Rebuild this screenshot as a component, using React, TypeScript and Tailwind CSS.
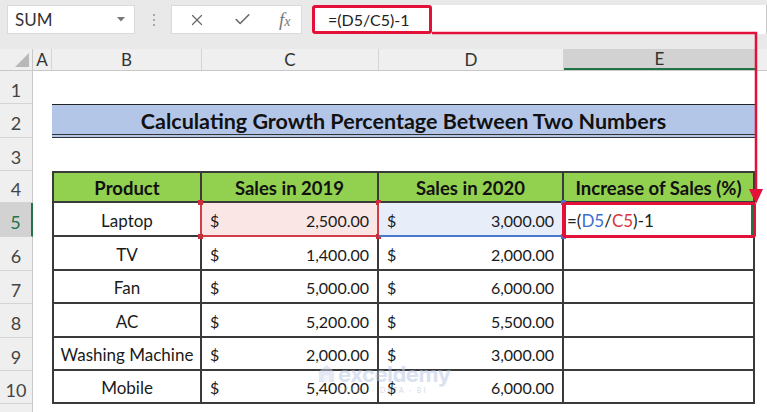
import React from 'react';
import { X, Check } from 'lucide-react';

interface RowData {
  n: number;
  product: string;
  s19: string;
  s20: string;
  h: string;
}

const rows: RowData[] = [
  { n: 6, product: 'TV', s19: '1,400.00', s20: '2,000.00', h: 'h-[34px]' },
  { n: 7, product: 'Fan', s19: '5,000.00', s20: '6,000.00', h: 'h-[33px]' },
  { n: 8, product: 'AC', s19: '5,200.00', s20: '5,500.00', h: 'h-[34px]' },
  { n: 9, product: 'Washing Machine', s19: '2,000.00', s20: '3,000.00', h: 'h-[33px]' },
  { n: 10, product: 'Mobile', s19: '5,400.00', s20: '6,000.00', h: 'h-[33px]' },
];

function RowHead({ n, active }: { n?: number; active?: boolean }) {
  return (
    <div
      className={`w-[33px] shrink-0 flex items-center justify-center border-b border-[#d4d4d4] text-[18px] pt-[6px] ${
        active
          ? 'bg-[#d2d2d2] text-[#217346] border-r-2 border-r-[#217346]'
          : 'bg-[#efefef] text-[#444] border-r border-r-[#c8c8c8]'
      }`}
    >
      {n}
    </div>
  );
}

function Money({ value }: { value: string }) {
  return (
    <>
      <span>$</span>
      <span>{value}</span>
    </>
  );
}

function Handle({ pos, color }: { pos: string; color: string }) {
  return <span className={`absolute w-[5px] h-[5px] ${pos} ${color}`} />;
}

export default function App() {
  return (
    <div className="relative w-[767px] h-[412px] overflow-hidden bg-white text-[#1a1a1a] font-['Lato',_'Open_Sans',_sans-serif]">
      {/* formula bar */}
      <div className="flex items-start h-[49px] bg-[#e9e9e9] pt-[5px] pl-[7px]">
        <div className="flex items-center justify-between w-[128px] h-[29px] bg-white border border-[#dadada] pl-[7px] pr-[9px] text-[17px] text-[#333]">
          SUM
          <svg width="8" height="5" viewBox="0 0 8 5">
            <polygon points="0,0 8,0 4,4.5" fill="#777" />
          </svg>
        </div>
        <div className="flex flex-col gap-[3px] mt-[9px] ml-[18px] mr-[16px]">
          <span className="w-[2px] h-[2px] bg-[#aaa]" />
          <span className="w-[2px] h-[2px] bg-[#aaa]" />
          <span className="w-[2px] h-[2px] bg-[#aaa]" />
        </div>
        <div className="flex items-center w-[131px] h-[29px] bg-white border border-[#dadada] pl-[16px] gap-[27px] text-[#6a6a6a]">
          <X size={18} strokeWidth={1.6} />
          <Check size={19} strokeWidth={2} />
          <span className="font-['Liberation_Serif',_serif] italic text-[19px] text-[#777] leading-none">
            f<span className="text-[14px]">x</span>
          </span>
        </div>
        <div className="ml-[10px] flex-1 h-[29px] bg-white border-r border-[#c8c8c8] flex items-center">
          <div className="h-[29px] w-[120px] border-[3px] border-[#e3113a] rounded-[3px] flex items-center pl-[13px] text-[16px] text-[#222]">
            =(D5/C5)-1
          </div>
        </div>
      </div>

      {/* column headers */}
      <div className="flex h-[22px] bg-[#efefef] text-[17px] text-[#333] border-b border-[#c8c8c8]">
        <div className="w-[33px] shrink-0 border-r border-[#c8c8c8] flex items-end justify-end pr-[3px] pb-[3px]">
          <svg width="14" height="14" viewBox="0 0 14 14">
            <polygon points="14,0 14,14 0,14" fill="#b8b8b8" />
          </svg>
        </div>
        <div className="w-[19px] shrink-0 border-r border-[#d4d4d4] flex items-center justify-center">A</div>
        <div className="w-[150px] shrink-0 border-r border-[#d4d4d4] flex items-center justify-center">B</div>
        <div className="w-[177px] shrink-0 border-r border-[#d4d4d4] flex items-center justify-center">C</div>
        <div className="w-[185px] shrink-0 border-r border-[#d4d4d4] flex items-center justify-center">D</div>
        <div className="w-[191px] shrink-0 bg-[#d2d2d2] border-b-2 border-[#217346] flex items-center justify-center">E</div>
        <div className="flex-1" />
      </div>

      {/* row 1 */}
      <div className="flex h-[33px]">
        <RowHead n={1} />
      </div>

      {/* row 2 - title */}
      <div className="flex h-[34px]">
        <RowHead n={2} />
        <div className="w-[19px] shrink-0" />
        <div className="w-[703px] shrink-0 bg-[#b4c6e7] border-t border-[#222] border-b-[4px] border-b-[#333] border-double flex items-center justify-center pt-[3px] font-bold text-[21.5px] text-[#111]">
          Calculating Growth Percentage Between Two Numbers
        </div>
      </div>

      {/* row 3 */}
      <div className="flex h-[33px]">
        <RowHead n={3} />
      </div>

      {/* row 4 - headers */}
      <div className="flex h-[32px]">
        <RowHead n={4} />
        <div className="w-[19px] shrink-0" />
        <div className="flex bg-[#92d050] border-t-2 border-l-2 border-[#3a3a3a] font-bold text-[18.5px] text-[#111]">
          <div className="w-[148px] border-r-2 border-b-2 border-[#3a3a3a] flex items-center justify-center pt-[3px]">Product</div>
          <div className="w-[177px] border-r-2 border-b-2 border-[#3a3a3a] flex items-center justify-center pt-[3px]">Sales in 2019</div>
          <div className="w-[185px] border-r-2 border-b-2 border-[#3a3a3a] flex items-center justify-center pt-[3px]">Sales in 2020</div>
          <div className="w-[191px] border-r-2 border-b-2 border-[#3a3a3a] flex items-center justify-center pt-[3px]">Increase of Sales (%)</div>
        </div>
      </div>

      {/* row 5 - active */}
      <div className="flex h-[34px] text-[16px]">
        <RowHead n={5} active />
        <div className="w-[19px] shrink-0" />
        <div className="w-[150px] shrink-0 border-l-2 border-b-2 border-[#3a3a3a] border-r-2 border-r-[#cf3f4a] flex items-center justify-center pt-[3px] text-[17px]">Laptop</div>
        <div className="relative w-[177px] shrink-0 bg-[#fbe6e6] border-r-2 border-b-2 border-[#cf3f4a] flex items-center justify-between pt-[3px] pl-[8px] pr-[8px]">
          <Money value="2,500.00" />
          <Handle pos="-left-[4px] -top-[3px]" color="bg-[#c9303c]" />
          <Handle pos="-right-[4px] -top-[3px]" color="bg-[#c9303c]" />
          <Handle pos="-left-[4px] -bottom-[4px]" color="bg-[#c9303c]" />
          <Handle pos="-right-[4px] -bottom-[4px]" color="bg-[#c9303c]" />
        </div>
        <div className="relative w-[185px] shrink-0 bg-[#e8eef9] border-b-2 border-b-[#4a78c8] border-r-2 border-r-[#3a3a3a] flex items-center justify-between pt-[3px] pl-[8px] pr-[8px]">
          <Money value="3,000.00" />
          <Handle pos="-right-[4px] -top-[3px]" color="bg-[#4a78c8]" />
          <Handle pos="-right-[4px] -bottom-[4px]" color="bg-[#4a78c8]" />
        </div>
        <div className="relative w-[191px] shrink-0 border-r-2 border-b-2 border-[#3a3a3a] flex items-center pt-[3px] pl-[3px] text-[#222] text-[17px]">
          <span>=(</span>
          <span className="text-[#3d6fd1]">D5</span>
          <span>/</span>
          <span className="text-[#d9363e]">C5</span>
          <span>)-1</span>
          <div className="absolute -left-[2px] -top-[1px] -right-[3px] -bottom-[3px] border-[3px] border-[#e3113a] rounded-[3px] pointer-events-none">
            <div className="absolute inset-y-0 left-0 w-[1px] bg-[#217346]" />
            <div className="absolute inset-y-0 right-0 w-[2px] bg-[#217346]" />
          </div>
        </div>
      </div>

      {rows.map((r) => (
        <div key={r.n} className={`flex ${r.h} text-[16px]`}>
          <RowHead n={r.n} />
          <div className="w-[19px] shrink-0" />
          <div className="w-[150px] shrink-0 border-l-2 border-r-2 border-b-2 border-[#3a3a3a] flex items-center justify-center pt-[3px] text-[17px]">{r.product}</div>
          <div className="w-[177px] shrink-0 border-r-2 border-b-2 border-[#3a3a3a] flex items-center justify-between pt-[3px] pl-[8px] pr-[8px]">
            <Money value={r.s19} />
          </div>
          <div className="w-[185px] shrink-0 border-r-2 border-b-2 border-[#3a3a3a] flex items-center justify-between pt-[3px] pl-[8px] pr-[8px]">
            <Money value={r.s20} />
          </div>
          <div className="w-[191px] shrink-0 border-r-2 border-b-2 border-[#3a3a3a]" />
        </div>
      ))}

      <div className="flex h-[10px]">
        <RowHead />
      </div>

      {/* watermark */}
      <div className="absolute left-[318px] top-[363px] flex items-start gap-[3px] opacity-50 pointer-events-none">
        <svg width="17" height="21" viewBox="0 0 18 22">
          <path d="M1 9 L9 2 L17 9 V20 H1 Z" fill="#c9d3ea" />
          <path d="M6 20 V13 H12 V20" fill="#e6ebf6" />
        </svg>
        <div className="flex flex-col leading-none">
          <span className="font-['Inter',_sans-serif] font-bold text-[22px] text-[#b7c4e4] tracking-[-0.5px]">exceldemy</span>
          <span className="text-[7px] text-[#b0b8c8] tracking-[2px] mt-[2px]">EXCEL · DATA · BI</span>
        </div>
      </div>

      {/* annotation arrow */}
      <svg className="absolute inset-0 pointer-events-none" width="767" height="412" viewBox="0 0 767 412">
        <path d="M432 33 H756 V192" fill="none" stroke="#e3113a" strokeWidth="2.5" />
        <polygon points="749,189 763,189 756,204" fill="#e3113a" />
      </svg>
    </div>
  );
}
